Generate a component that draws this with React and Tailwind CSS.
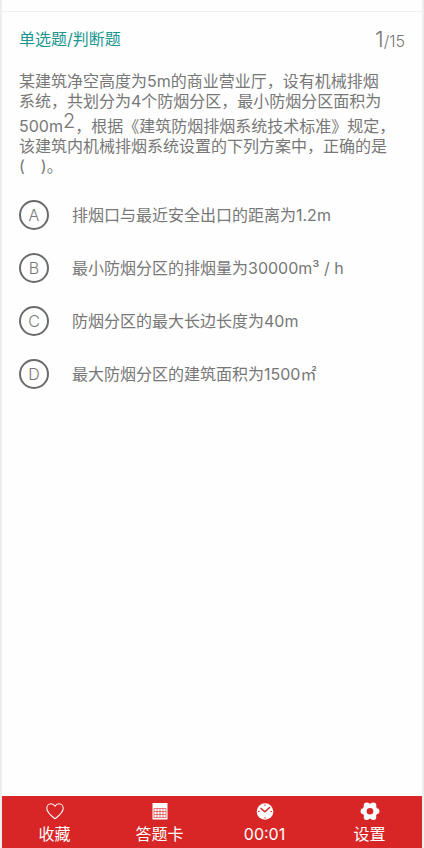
import { useState } from "react";

const options = [
  { key: "A", text: "排烟口与最近安全出口的距离为1.2m" },
  { key: "B", text: "最小防烟分区的排烟量为30000m³ / h" },
  { key: "C", text: "防烟分区的最大长边长度为40m" },
  { key: "D", text: "最大防烟分区的建筑面积为1500㎡" },
];

function HeartIcon() {
  return (
    <svg width="20" height="20" viewBox="0 0 20 20" fill="none" stroke="currentColor" strokeWidth="1.1" strokeLinejoin="round" aria-hidden="true">
      <path d="M10 17.800C7.200 15.600 1.800 11.800 1.800 7.300 1.800 4.700 3.700 2.700 6 2.700c1.800 0 3.200 1 4 2.500.8-1.500 2.200-2.500 4-2.500 2.300 0 4.200 2 4.200 4.600 0 4.500-5.400 8.300-8.200 10.500z" />
    </svg>
  );
}

function SheetIcon() {
  return (
    <svg width="20" height="20" viewBox="0 0 20 20" aria-hidden="true">
      <rect x="2.500" y="2" width="15" height="16.500" rx="0.500" fill="currentColor" />
      <g stroke="#d82626" strokeWidth="0.600" fill="none">
        <path d="M4 7.500h12M4 10.500h12M4 13.500h12M4 16.500h12M4 7.500v9M7 7.500v9M10 7.500v9M13 7.500v9M16 7.500v9" />
      </g>
    </svg>
  );
}

function ClockIcon() {
  return (
    <svg width="20" height="20" viewBox="0 0 20 20" aria-hidden="true">
      <circle cx="10" cy="10.500" r="8.300" fill="currentColor" />
      <g stroke="#d82626" fill="none" strokeLinecap="round" strokeLinejoin="round">
        <path d="M6 7.500l4 3.300 4.600-4.300" strokeWidth="1.500" />
        <path d="M10 3.800v.8M10 16.400v.8M3.400 10.500h.8M15.800 10.500h.8" strokeWidth="1" />
      </g>
    </svg>
  );
}

function GearIcon() {
  return (
    <svg width="20" height="20" viewBox="0 0 20 20" aria-hidden="true">
      <g fill="currentColor">
        <circle cx="10" cy="10.200" r="7.600" />
        <circle cx="3.500" cy="10.200" r="2.900" />
        <circle cx="16.500" cy="10.200" r="2.900" />
        <circle cx="6.700" cy="4.500" r="3" />
        <circle cx="13.300" cy="4.500" r="3" />
        <circle cx="6.700" cy="15.900" r="3" />
        <circle cx="13.300" cy="15.900" r="3" />
      </g>
      <circle cx="10" cy="10.200" r="3.300" fill="#d82626" />
    </svg>
  );
}

const tools = [
  { label: "收藏", Icon: HeartIcon },
  { label: "答题卡", Icon: SheetIcon },
  { label: "00:01", Icon: ClockIcon },
  { label: "设置", Icon: GearIcon },
];

export default function App() {
  const [picked, setPicked] = useState(null);

  return (
    <div className="flex min-h-screen flex-col border-x-2 border-[#eeeeee] bg-[#fefefe] font-['Inter','Noto_Sans_CJK_SC',sans-serif] text-base text-[#777777]">
      <div className="h-3 border-b border-[#f0f0f0]" />

      <header className="flex h-[54px] items-center justify-between px-[17px]">
        <h1 className="text-[#1c9690]">单选题/判断题</h1>
        <p className="font-light text-[#777777]">
          <span className="text-[22px]">1</span>/15
        </p>
      </header>

      <main className="flex-1 px-[17px]">
        <p className="pt-[5px] leading-5">
          某建筑净空高度为5m的商业营业厅，设有机械排烟
          <br />
          系统，共划分为4个防烟分区，最小防烟分区面积为
          <br />
          500m<span className="align-[4px] text-xl leading-5 font-light">2</span>，根据《建筑防烟排烟系统技术标准》规定，
          <br />
          该建筑内机械排烟系统设置的下列方案中，正确的是
          <br />
          (　)。
        </p>

        <div className="flex flex-col gap-[23px] pt-6">
          {options.map((o) => (
            <button
              key={o.key}
              type="button"
              aria-pressed={picked === o.key}
              onClick={() => setPicked(o.key)}
              className="flex items-center gap-[23px] text-left"
            >
              <span className="flex size-[30px] items-center justify-center rounded-full border-2 border-[#6b6b6b] font-light">
                {o.key}
              </span>
              <span>{o.text}</span>
            </button>
          ))}
        </div>
      </main>

      <footer className="grid h-[52px] grid-cols-4 bg-[#d82626] text-white">
        {tools.map(({ label, Icon }) => (
          <button key={label} type="button" className="flex flex-col items-center gap-px pt-[5px]">
            <Icon />
            <span>{label}</span>
          </button>
        ))}
      </footer>
    </div>
  );
}
